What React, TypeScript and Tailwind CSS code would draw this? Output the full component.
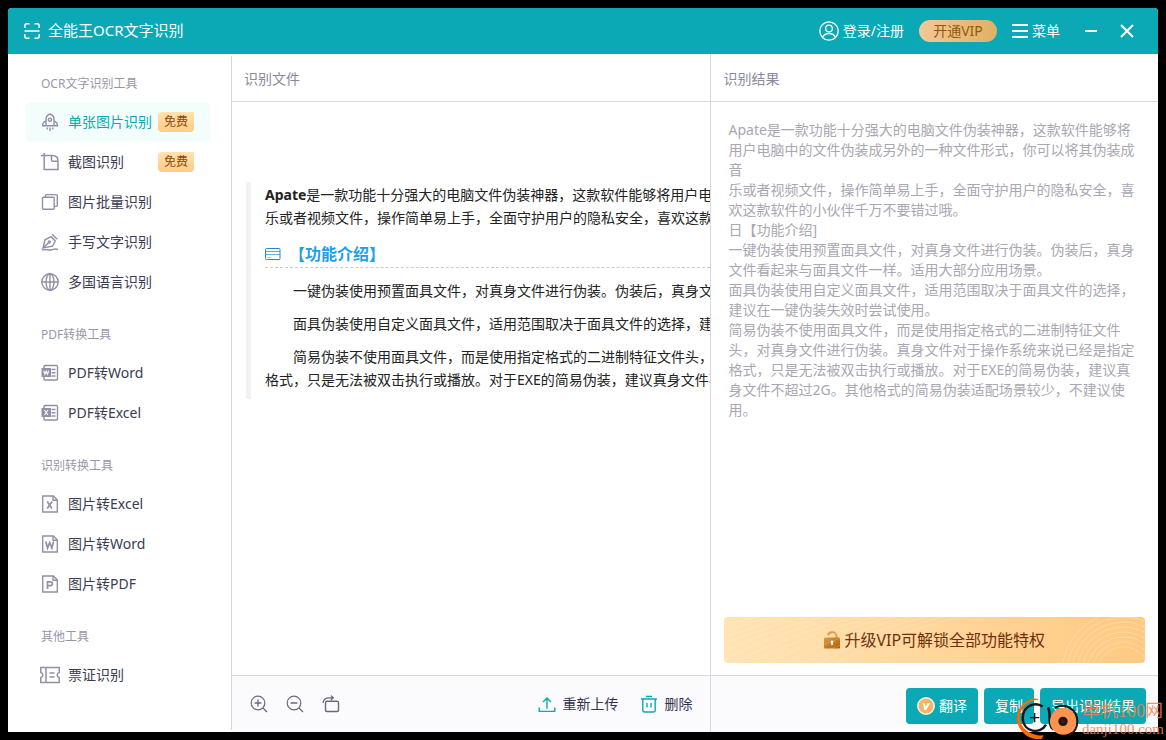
import { ReactNode } from "react";
import clsx from "clsx";

interface IIcon {
  className?: string;
  children?: ReactNode;
}

// base for the 18px line icons of the sidebar and the toolbar
const Icon: React.FC<IIcon> = ({ className, children }) => (
  <svg
    viewBox="0 0 18 18"
    className={clsx("size-[18px] shrink-0", className)}
    fill="none"
    stroke="currentColor"
    strokeWidth="1.4"
    aria-hidden="true"
  >
    {children}
  </svg>
);

const IconRocket = () => (
  <Icon>
    <path d="M5 12.5V6.500C5 4 6.800 1.800 9 1c2.200.8 4 3 4 5.500v6" />
    <circle cx="9" cy="6.700" r="1.600" />
    <path d="M5 7.800C2.500 8.800 1.500 10.500 1.500 12.800H16.500C16.500 10.500 15.500 8.800 13 7.800" />
    <path d="M6.200 14.500v2M9 14.500v3.500M11.800 14.500v2" />
  </Icon>
);

const IconCrop = () => (
  <Icon>
    <path d="M3.200 0V16.500H17V8C17 4.500 14.500 2.500 11 2.500H0" strokeWidth="1.500" />
    <path d="M10.500 3V7C10.500 7.800 11 8.300 11.800 8.300H17" strokeWidth="1.500" />
  </Icon>
);

const IconStack = () => (
  <Icon>
    <rect x="1.500" y="4.300" width="11.700" height="12" rx="1" />
    <path d="M4.500 4V2.500C4.500 2 4.900 1.600 5.400 1.600H15.200C15.800 1.600 16.300 2 16.300 2.600V12.500C16.300 13 15.900 13.400 15.300 13.400H13.500" />
  </Icon>
);

const IconPen = () => (
  <Icon>
    <path d="M2 15 4 6.800 10 3.700 14.200 8 11.500 13.200 2 15 7.500 9.800" />
    <circle cx="8.300" cy="9" r="1" />
    <path d="M11.200 1.200 16.200 6.200" />
    <path d="M1 17C5 15.800 7 17.300 10 17c2.500-.3 4-2 7-.5" />
  </Icon>
);

const IconGlobe = () => (
  <Icon>
    <circle cx="9" cy="9" r="8.200" />
    <ellipse cx="9" cy="9" rx="4" ry="8.200" />
    <path d="M.8 9H17.200M9 .8V17.200" />
  </Icon>
);

const IconOffice: React.FC<{ letter: string }> = ({ letter }) => (
  <Icon>
    <rect x="3" y="1.500" width="13.500" height="14.500" rx="1" />
    <path d="M10.500 5.500H14.500M10.500 8.700H14.500M10.500 12H14.500" />
    <rect x="0.500" y="4" width="9.500" height="9" fill="currentColor" stroke="none" />
    <path
      stroke="#fff"
      strokeWidth="1.100"
      d={letter === "W" ? "M2.700 6.800 3.900 10.300 5.200 7.200 6.500 10.300 7.700 6.800" : "M3.500 6 7 11M7 6 3.500 11"}
    />
  </Icon>
);

const fileMarks: Record<string, string> = {
  X: "M6.200 6.500 11 13.500M11 6.500 6.200 13.500",
  W: "M4.800 6.500 6.500 13 8.700 7.500 10.900 13 12.600 6.500",
  P: "M6.500 14V6.800H9.500C12 6.800 12 10.700 9.500 10.700H6.500",
};

const IconFile: React.FC<{ letter: string }> = ({ letter }) => (
  <Icon>
    <path d="M1.700 1H12.500L16.300 5V17H1.700Z" />
    <path d="M12 1V5.300H16.300" />
    <path d={fileMarks[letter]} strokeWidth="1.700" />
  </Icon>
);

const IconTicket = () => (
  <svg viewBox="0 0 20 18" className="w-5 h-[18px] -mx-px shrink-0" fill="none" stroke="currentColor" strokeWidth="1.500" aria-hidden="true">
    <path d="M.8 1.500H19.200V6.500C16.500 7.200 16.500 10.800 19.200 11.500V16.500H.8V11.500C3.500 10.800 3.500 7.200 .8 6.500Z" />
    <path d="M6 1.500V16.500M9.500 7H14.500M9.500 11H14.500" />
  </svg>
);

const IconZoomIn = () => (
  <Icon>
    <circle cx="8" cy="8" r="6.800" strokeWidth="1.200" />
    <path d="M13 13 17 17M4.600 8H11.400M8 4.600V11.400" strokeWidth="1.300" />
  </Icon>
);

const IconZoomOut = () => (
  <Icon>
    <circle cx="8" cy="8" r="6.800" strokeWidth="1.200" />
    <path d="M13 13 17 17M4.600 8H11.400" strokeWidth="1.300" />
  </Icon>
);

const IconRotate = () => (
  <Icon>
    <rect x="3.500" y="6.300" width="13" height="10.200" rx="1.500" />
    <path d="M1 8C1.500 4.500 4 2.800 7 2.800H11M9 .6 11.300 2.800 9 5" strokeWidth="1.300" />
  </Icon>
);

const IconUpload = () => (
  <Icon>
    <path d="M1.200 12.500V16.400H16.800V12.500" />
    <path d="M9 13.800V3M5 7 9 3 13 7" />
  </Icon>
);

const IconTrash = () => (
  <Icon>
    <path d="M1 4H17M6 1.500H12" />
    <path d="M2.800 4V15C2.800 16.200 3.500 17 4.700 17H13.300C14.500 17 15.200 16.200 15.200 15V4" />
    <path d="M7 8V12.500M11 8V12.500" />
  </Icon>
);

interface IMenuItem {
  label: string;
  icon: ReactNode;
  free?: boolean;
  active?: boolean;
}

const menuGroups: { title: string; items: IMenuItem[] }[] = [
  {
    title: "OCR文字识别工具",
    items: [
      { label: "单张图片识别", icon: <IconRocket />, free: true, active: true },
      { label: "截图识别", icon: <IconCrop />, free: true },
      { label: "图片批量识别", icon: <IconStack /> },
      { label: "手写文字识别", icon: <IconPen /> },
      { label: "多国语言识别", icon: <IconGlobe /> },
    ],
  },
  {
    title: "PDF转换工具",
    items: [
      { label: "PDF转Word", icon: <IconOffice letter="W" /> },
      { label: "PDF转Excel", icon: <IconOffice letter="X" /> },
    ],
  },
  {
    title: "识别转换工具",
    items: [
      { label: "图片转Excel", icon: <IconFile letter="X" /> },
      { label: "图片转Word", icon: <IconFile letter="W" /> },
      { label: "图片转PDF", icon: <IconFile letter="P" /> },
    ],
  },
  {
    title: "其他工具",
    items: [{ label: "票证识别", icon: <IconTicket /> }],
  },
];

const resultLines = [
  "Apate是一款功能十分强大的电脑文件伪装神器，这款软件能够将用户电脑中的文件伪装成另外的一种文件形式，你可以将其伪装成音",
  "乐或者视频文件，操作简单易上手，全面守护用户的隐私安全，喜欢这款软件的小伙伴千万不要错过哦。",
  "日【功能介绍]",
  "一键伪装使用预置面具文件，对真身文件进行伪装。伪装后，真身文件看起来与面具文件一样。适用大部分应用场景。",
  "面具伪装使用自定义面具文件，适用范围取决于面具文件的选择，建议在一键伪装失效时尝试使用。",
  "简易伪装不使用面具文件，而是使用指定格式的二进制特征文件头，对真身文件进行伪装。真身文件对于操作系统来说已经是指定格式，只是无法被双击执行或播放。对于EXE的简易伪装，建议真身文件不超过2G。其他格式的简易伪装适配场景较少，不建议使用。",
];

const TitleBar = () => (
  <header className="flex h-[46px] shrink-0 items-center bg-[#0aa9b5] pl-4 pr-6 text-sm text-white">
    <svg viewBox="0 0 16 16" className="size-4" fill="none" stroke="currentColor" strokeWidth="1.600" aria-hidden="true">
      <path d="M.8 5V3C.8 1.600 1.600.8 3 .8H5.500M10.500.8H13C14.400.8 15.200 1.600 15.200 3V5M.8 11V13C.8 14.400 1.600 15.200 3 15.200H5.500M10.500 15.200H13C14.400 15.200 15.200 14.400 15.200 13V11M.5 8H15.500" />
    </svg>
    <h1 className="ml-2 text-[15px]">全能王OCR文字识别</h1>
    <div className="ml-auto flex items-center">
      <button type="button" className="flex items-center gap-1">
        <svg viewBox="0 0 20 20" className="size-5" fill="none" stroke="currentColor" strokeWidth="1.300" aria-hidden="true">
          <circle cx="10" cy="10" r="9.200" />
          <circle cx="10" cy="7.500" r="3.300" />
          <path d="M3.800 16C5 13.300 7.300 12.500 10 12.500S15 13.300 16.200 16" />
        </svg>
        登录/注册
      </button>
      <button
        type="button"
        className="ml-[15px] h-[22px] w-[78px] rounded-full bg-linear-to-r from-[#f2c898] to-[#e0b064] leading-[22px] text-[#8f5a0c]"
      >
        开通VIP
      </button>
      <button type="button" className="ml-[15px] flex items-center gap-1">
        <svg viewBox="0 0 16 14" className="h-3.5 w-4" stroke="currentColor" strokeWidth="2" aria-hidden="true">
          <path d="M0 1H16M0 7H16M0 13H16" />
        </svg>
        菜单
      </button>
      <button type="button" aria-label="最小化" className="ml-6">
        <svg viewBox="0 0 14 14" className="size-3.5" stroke="currentColor" strokeWidth="2">
          <path d="M1 7H13" />
        </svg>
      </button>
      <button type="button" aria-label="关闭" className="ml-[22px]">
        <svg viewBox="0 0 14 14" className="size-3.5" stroke="currentColor" strokeWidth="2">
          <path d="M1 1 13 13M13 1 1 13" />
        </svg>
      </button>
    </div>
  </header>
);

const SideMenu = () => (
  <nav className="my-0.5 flex w-56 shrink-0 flex-col gap-6 border-r border-[#d6d7e3] pl-[18px] pr-[21px] pt-[19px]">
    {menuGroups.map((group) => (
      <section key={group.title}>
        <h2 className="mb-[9px] pl-[15px] text-xs leading-[18px] text-[#9897aa]">{group.title}</h2>
        <ul>
          {group.items.map((item) => (
            <li key={item.label}>
              <a
                href="#"
                className={clsx(
                  "flex h-10 items-center rounded pl-[15px] pr-4 text-sm",
                  item.active ? "bg-[#f3fdfc] text-[#0aa9b5]" : "text-[#3b3b52]"
                )}
              >
                <span className="mr-[9px] flex text-[#9190a6]">{item.icon}</span>
                {item.label}
                {item.free && (
                  <span className="ml-auto h-5 w-9 rounded-l rounded-br bg-linear-to-b from-[#ffe2af] to-[#ffcb85] text-center text-xs leading-5 text-[#8a4b0c]">
                    免费
                  </span>
                )}
              </a>
            </li>
          ))}
        </ul>
      </section>
    ))}
  </nav>
);

const FilePanel = () => (
  <section className="flex min-w-0 flex-[479] flex-col border-r border-[#d9d7e6]">
    <h2 className="h-12 shrink-0 border-b border-[#d9d7e6] px-3 text-sm leading-[49px] text-[#8b8a9c]">识别文件</h2>
    <div className="flex-1 overflow-hidden pl-3.5 pt-20">
      <article className="whitespace-nowrap border-l-[5px] border-[#f2f2f2] pb-2 pl-3.5 pt-px text-sm leading-[23px] text-[#222]">
        <p>
          <b>Apate</b>是一款功能十分强大的电脑文件伪装神器，这款软件能够将用户电脑
          <br />
          乐或者视频文件，操作简单易上手，全面守护用户的隐私安全，喜欢这款软
        </p>
        <h3 className="mt-[11px] flex h-7 items-center border-b border-dashed border-[#ccc] text-base font-bold text-[#1e9fe9]">
          <svg viewBox="0 0 16 14" className="mr-2 h-3.5 w-4" fill="none" stroke="#2a86c8" aria-hidden="true">
            <rect x="0.500" y="1.500" width="14.500" height="11" rx="1" />
            <path d="M1 4.500H15M1 7.500H15" opacity=".7" />
            <path d="M2.500 10.500H5.500" opacity=".5" />
          </svg>
          【功能介绍】
        </h3>
        <div className="mt-[11px] flex flex-col gap-2.5">
          <p className="indent-7">一键伪装使用预置面具文件，对真身文件进行伪装。伪装后，真身文件</p>
          <p className="indent-7">面具伪装使用自定义面具文件，适用范围取决于面具文件的选择，建议</p>
          <p className="indent-7">
            简易伪装不使用面具文件，而是使用指定格式的二进制特征文件头，对
            <br />
            格式，只是无法被双击执行或播放。对于EXE的简易伪装，建议真身文件不
          </p>
        </div>
      </article>
    </div>
    <footer className="flex h-[57px] shrink-0 items-center border-t border-[#d9d7e6] bg-[#fbfbfe] px-[18px] text-sm text-[#33334d]">
      <div className="flex gap-[18px] text-[#6a6880]">
        <button type="button" aria-label="放大"><IconZoomIn /></button>
        <button type="button" aria-label="缩小"><IconZoomOut /></button>
        <button type="button" aria-label="旋转"><IconRotate /></button>
      </div>
      <div className="ml-auto flex gap-[22px]">
        <button type="button" className="flex items-center gap-1.5">
          <span className="text-[#0aa9b5]"><IconUpload /></span>
          重新上传
        </button>
        <button type="button" className="flex items-center gap-1.5">
          <span className="text-[#0aa9b5]"><IconTrash /></span>
          删除
        </button>
      </div>
    </footer>
  </section>
);

const VipBanner = () => (
  <button
    type="button"
    className="relative mx-[13px] mb-3 flex h-[46px] shrink-0 items-center justify-center gap-1 overflow-hidden rounded bg-linear-to-r from-[#ffe4b5] to-[#ffc981] text-base text-[#6f2d0a]"
  >
    <svg viewBox="0 0 421 46" className="absolute inset-0 size-full" preserveAspectRatio="none" fill="none" stroke="#fff" aria-hidden="true">
      <g strokeOpacity=".18">
        {[0, 1, 2, 3, 4, 5, 6, 7, 8, 9, 10, 11, 12].map((i) => (
          <path key={i} d={`M${i * 17 - 100} 50Q${i * 17 - 30} 12 ${i * 17 + 50} -4`} />
        ))}
      </g>
      <g strokeOpacity=".26">
        {[27, 32, 37, 42, 47, 52, 57, 62].map((r) => (
          <circle key={r} cx="400" cy="57" r={r} />
        ))}
      </g>
    </svg>
    <svg viewBox="0 0 16 18" className="h-[18px] w-4" aria-hidden="true">
      <defs>
        <linearGradient id="lock" x1="0" y1="0" x2="1" y2="1">
          <stop offset="0" stopColor="#dc9c4a" />
          <stop offset="1" stopColor="#b25e00" />
        </linearGradient>
      </defs>
      <path d="M4 4.500C4.500 2.200 6 1.200 8.200 1.200S12.500 2.800 12.500 5V7" fill="none" stroke="#dda04f" strokeWidth="2" />
      <rect y="6.500" width="16" height="11" rx="1" fill="url(#lock)" />
      <path d="M8 10V14" stroke="#fff" strokeWidth="1.600" />
      <circle cx="8" cy="10.800" r="1.400" fill="#fff" />
    </svg>
    升级VIP可解锁全部功能特权
  </button>
);

const ResultPanel = () => (
  <section className="flex min-w-0 flex-[447] flex-col">
    <h2 className="h-12 shrink-0 border-b border-[#d9d7e6] px-3 text-sm leading-[49px] text-[#8b8a9c]">识别结果</h2>
    <div className="flex-1 overflow-hidden pl-[17px] pr-5 pt-[18px] text-sm leading-5 text-[#a9a7b2]">
      {resultLines.map((line) => (
        <p key={line}>{line}</p>
      ))}
    </div>
    <VipBanner />
    <footer className="flex h-[57px] shrink-0 items-center justify-end gap-1.5 border-t border-[#d9d7e6] bg-[#fbfbfe] px-3 pt-1 text-sm text-white">
      <button type="button" className="flex h-9 items-center gap-1 rounded bg-[#0aa9b5] px-[11px]">
        <svg viewBox="0 0 18 18" className="size-[18px]" aria-hidden="true">
          <circle cx="9" cy="9" r="8.200" fill="#efb766" stroke="#fff3dc" strokeWidth="1.500" />
          <path d="M5 6.200H7.700L8.600 10 11 6H13.300L9 13H7.200L6.200 7.500Z" fill="#fff" />
        </svg>
        翻译
      </button>
      <button type="button" className="h-9 rounded bg-[#0aa9b5] px-[11px]">复制</button>
      <button type="button" className="h-9 rounded bg-[#0aa9b5] px-[11px]">导出识别结果</button>
    </footer>
  </section>
);

// site mark laid over the bottom right corner
const SiteMark = () => (
  <div className="pointer-events-none absolute bottom-0 right-0.5 flex items-end gap-0.5 text-[#f0824e]">
    <svg viewBox="50 80 192 132" className="h-11 w-16" fill="none" aria-hidden="true">
      <path d="M118 92C108 78 56 96 53 145C52 185 92 216 128 208L132 198C98 200 62 178 61 145C62 112 92 90 118 92Z" fill="#ff6a00" />
      <path d="M130 112C112 98 72 104 70 146C72 190 124 196 140 166" stroke="#1c1718" strokeWidth="7" />
      <path d="M146 114C156 130 144 168 162 180" stroke="#1c1718" strokeWidth="8" />
      <path d="M92 145H120M106 131V159" stroke="#1c1718" strokeWidth="4" />
      <circle cx="192" cy="156" r="40" fill="#ff924c" />
      <path d="M166 116C200 98 234 122 234 156C234 178 222 192 208 199" stroke="#1c1718" strokeWidth="6" />
      <circle cx="191" cy="156" r="14" fill="#1c1718" />
      <circle cx="191" cy="156" r="5" fill="#5a1608" />
    </svg>
    <div className="pb-[3px] font-['Liberation_Serif','Noto_Sans_CJK_SC',serif] opacity-85">
      <p className="text-lg leading-5">单机100网</p>
      <p className="text-[15px] leading-4">danji100.com</p>
    </div>
  </div>
);

export default function App() {
  return (
    <div className="relative flex min-h-screen flex-col bg-black p-2 font-['Noto_Sans','Noto_Sans_CJK_SC',sans-serif]">
      <div className="flex flex-1 flex-col overflow-hidden rounded-t-sm bg-white">
        <TitleBar />
        <main className="flex flex-1">
          <SideMenu />
          <FilePanel />
          <ResultPanel />
        </main>
      </div>
      <SiteMark />
    </div>
  );
}
